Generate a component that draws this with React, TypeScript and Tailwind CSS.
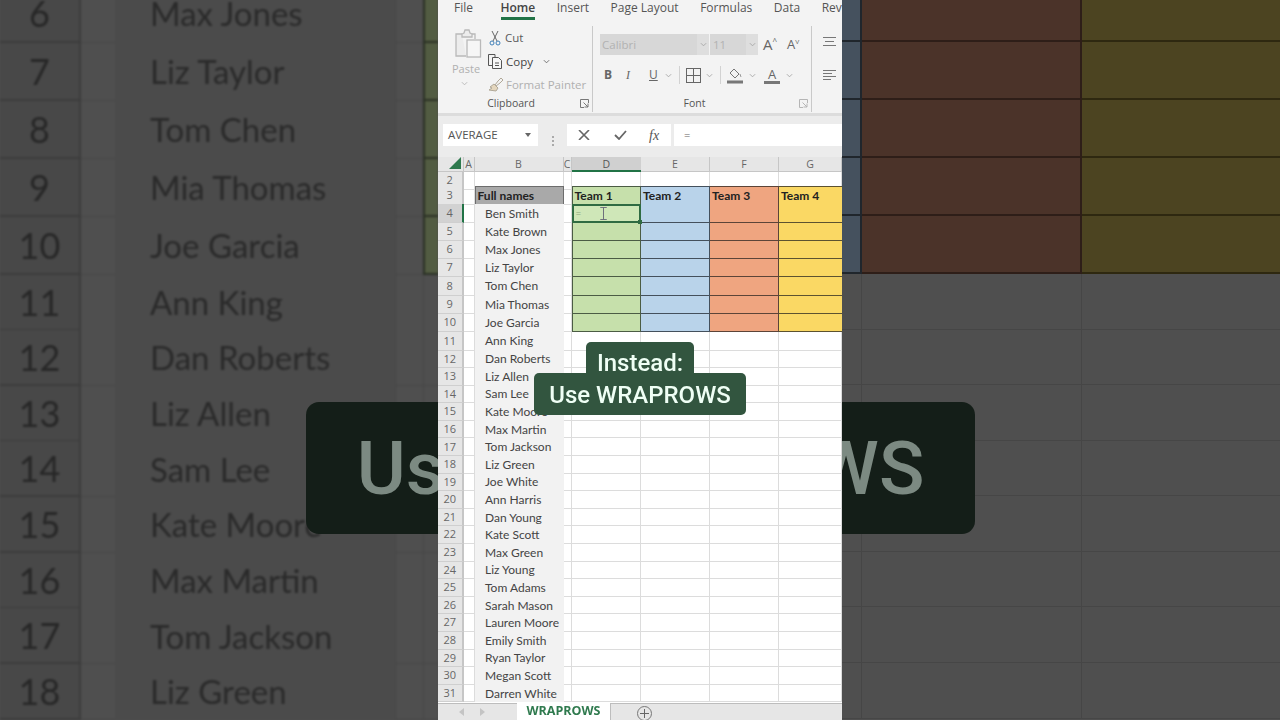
import { ReactNode } from "react";

const names = [
  "Ben Smith", "Kate Brown", "Max Jones", "Liz Taylor", "Tom Chen", "Mia Thomas", "Joe Garcia",
  "Ann King", "Dan Roberts", "Liz Allen", "Sam Lee", "Kate Moore", "Max Martin", "Tom Jackson",
  "Liz Green", "Joe White", "Ann Harris", "Dan Young", "Kate Scott", "Max Green", "Liz Young",
  "Tom Adams", "Sarah Mason", "Lauren Moore", "Emily Smith", "Ryan Taylor", "Megan Scott", "Darren White",
];

const leftRows = [
  { n: 6, name: "Max Jones", h: "h-[58px]", team: true },
  { n: 7, name: "Liz Taylor", h: "h-[58px]", team: true },
  { n: 8, name: "Tom Chen", h: "h-[58px]", team: true },
  { n: 9, name: "Mia Thomas", h: "h-[58px]", team: true },
  { n: 10, name: "Joe Garcia", h: "h-[58px]", team: true },
  { n: 11, name: "Ann King", h: "h-[55px]", team: false },
  { n: 12, name: "Dan Roberts", h: "h-[55.7px]", team: false },
  { n: 13, name: "Liz Allen", h: "h-[55.7px]", team: false },
  { n: 14, name: "Sam Lee", h: "h-[55.7px]", team: false },
  { n: 15, name: "Kate Moore", h: "h-[55.7px]", team: false },
  { n: 16, name: "Max Martin", h: "h-[55.7px]", team: false },
  { n: 17, name: "Tom Jackson", h: "h-[55.7px]", team: false },
  { n: 18, name: "Liz Green", h: "h-[55.7px]", team: false },
];

const sheetCols = "grid grid-cols-[25.5px_11px_89px_8px_69.5px_69px_69px_63px]";
const uiFont = "font-['Open_Sans',sans-serif]";
const cellFont = "font-['Lato',sans-serif]";

function Chevron({ className = "" }: { className?: string }) {
  return (
    <svg viewBox="0 0 8 5" className={`w-[7px] h-[5px] ${className}`} fill="none" stroke="currentColor" strokeWidth="1">
      <path d="M1 1l3 3 3-3" />
    </svg>
  );
}

function Launcher({ className = "" }: { className?: string }) {
  return (
    <svg viewBox="0 0 9 9" className={`w-[9px] h-[9px] ${className}`} fill="none" stroke="currentColor" strokeWidth="1">
      <path d="M8.5 4V.5H.5v8H4M3.5 3.5l4.5 4.5M8 4.5V8H4.5" />
    </svg>
  );
}

function ClipboardGroup() {
  return (
    <div className="w-[155px] shrink-0 flex flex-col border-r border-[#c9c9c9] h-[86px]">
      <div className="flex flex-1 pl-[14px] pt-[3px]">
        <div className="w-[36px] flex flex-col items-start text-[#b0b0b0]">
          <svg viewBox="0 0 28 30" className="w-[28px] h-[30px] ml-[2px]" fill="none" stroke="#b9b9b9" strokeWidth="1.3">
            <path d="M8 5H2v22h10" fill="#ececec" />
            <path d="M8 5l2-1 1-3h4l1 3 2 1v3H8z" fill="#ececec" />
            <path d="M18 5h3v5" />
            <rect x="13" y="11" width="13.5" height="17" fill="#f6f6f6" />
          </svg>
          <span className={`${uiFont} text-[11px] leading-[14px] mt-[3px]`}>Paste</span>
          <Chevron className="ml-[9px] mt-[5px] text-[#b5b5b5]" />
        </div>
        <div className={`${uiFont} text-[11.5px] leading-[16px] flex flex-col`}>
          <div className="flex items-center h-[20px] mt-[-1px] text-[#5a5a5a]">
            <svg viewBox="0 0 12 16" className="w-[12px] h-[16px] mr-[4px] ml-[1px]" fill="none" strokeWidth="1">
              <path d="M3 1l5 10M9 1L4 11" stroke="#666" />
              <circle cx="3" cy="13" r="2" stroke="#3f7fb8" />
              <circle cx="9" cy="13" r="2" stroke="#3f7fb8" />
            </svg>
            Cut
          </div>
          <div className="flex items-center h-[23px] mt-[2px] text-[#444]">
            <svg viewBox="0 0 15 15" className="w-[15px] h-[15px] mr-[3px]" fill="none" stroke="#555" strokeWidth="1">
              <path d="M7 3V.5H.5v11H4" />
              <path d="M4.5 3.5h6l3 3v8h-9z" fill="#f6f6f6" />
              <path d="M7 9h4M7 11.5h4" />
            </svg>
            Copy
            <Chevron className="ml-[10px] text-[#666]" />
          </div>
          <div className="flex items-center h-[23px] text-[#b0b0b0]">
            <svg viewBox="0 0 16 15" className="w-[16px] h-[15px] mr-[2px]" fill="none" stroke="#b0a898" strokeWidth="1">
              <path d="M7 8l3-4 3-3 2 2-3 3-4 3z" />
              <path d="M6 7l4 4-2 3-7-1 3-2-2-1z" fill="#e4d6bd" />
            </svg>
            Format Painter
          </div>
        </div>
      </div>
      <div className="relative h-[16px] flex items-center justify-center">
        <span className={`${uiFont} text-[10.5px] text-[#555] ml-[-8px]`}>Clipboard</span>
        <Launcher className="absolute right-[3px] top-[3px] text-[#777]" />
      </div>
    </div>
  );
}

function FontGroup() {
  return (
    <div className="w-[219px] shrink-0 flex flex-col border-r border-[#c9c9c9] h-[86px]">
      <div className="flex-1 pl-[7px] pt-[8px]">
        <div className="flex items-center h-[21px]">
          <div className={`${uiFont} w-[97px] h-full bg-[#d7d7d7] text-[#b2b2b2] text-[11.5px] leading-[21px] pl-[2px]`}>Calibri</div>
          <div className="w-[12px] h-full bg-[#dedede] flex items-center justify-center text-[#a5a5a5]">
            <Chevron />
          </div>
          <div className={`${uiFont} ml-[1px] w-[36px] h-full bg-[#d7d7d7] text-[#b2b2b2] text-[11.5px] leading-[21px] pl-[3px]`}>11</div>
          <div className="w-[12px] h-full bg-[#dedede] flex items-center justify-center text-[#a5a5a5]">
            <Chevron />
          </div>
          <span className={`${uiFont} ml-[5px] text-[#666] text-[15px] leading-none`}>A</span>
          <span className="text-[#666] text-[8px] leading-none mb-[8px]">^</span>
          <span className={`${uiFont} ml-[10px] text-[#666] text-[13px] leading-none`}>A</span>
          <span className="text-[#666] text-[8px] leading-none mb-[8px] rotate-180">^</span>
        </div>
        <div className={`${uiFont} flex items-center h-[24px] mt-[8px] text-[#666]`}>
          <span className="w-[22px] ml-[4px] font-bold text-[12px]">B</span>
          <span className="w-[23px] italic text-[12px] font-['Liberation_Serif',serif]">I</span>
          <span className="w-[15px] underline text-[12px]">U</span>
          <Chevron className="ml-[1px] text-[#a5a5a5]" />
          <div className="w-px h-[18px] bg-[#d2d2d2] ml-[7px]" />
          <svg viewBox="0 0 15 15" className="w-[15px] h-[15px] ml-[6px]" fill="none" stroke="#666" strokeWidth="1">
            <rect x="0.5" y="0.5" width="14" height="14" />
            <path d="M7.5 0v15M0 7.5h15" />
          </svg>
          <Chevron className="ml-[5px] text-[#a5a5a5]" />
          <div className="w-px h-[18px] bg-[#d2d2d2] ml-[7px]" />
          <svg viewBox="0 0 16 17" className="w-[16px] h-[17px] ml-[6px]" fill="none" stroke="#777" strokeWidth="1">
            <path d="M7 2l5 5-4 4-5-5z" />
            <path d="M13 7l1 3" stroke="#999" />
            <rect x="0" y="13.5" width="16" height="3" fill="#777" stroke="none" />
          </svg>
          <Chevron className="ml-[6px] text-[#a5a5a5]" />
          <div className="ml-[8px] w-[16px] flex flex-col items-center">
            <span className="text-[13px] leading-[14px]">A</span>
            <div className="w-[16px] h-[3px] bg-[#777]" />
          </div>
          <Chevron className="ml-[6px] text-[#a5a5a5]" />
        </div>
      </div>
      <div className="relative h-[16px] flex items-center justify-center">
        <span className={`${uiFont} text-[10.5px] text-[#555] ml-[-15px]`}>Font</span>
        <Launcher className="absolute right-[3px] top-[3px] text-[#b5b5b5]" />
      </div>
    </div>
  );
}

function Ribbon() {
  return (
    <div className="bg-[#f3f3f3] h-[113px] overflow-hidden">
      <div className={`${uiFont} flex items-start pl-[16px] h-[24px] gap-[21.5px] text-[12px] leading-[16px] pt-[0px] text-[#555] whitespace-nowrap`}>
        <span>File</span>
        <div className="ml-[6px] flex flex-col items-stretch">
          <span className="font-semibold text-[#444]">Home</span>
          <div className="h-[2.5px] bg-[#217346] mt-[1px]" />
        </div>
        <span>Insert</span>
        <span>Page Layout</span>
        <span>Formulas</span>
        <span>Data</span>
        <span>Review</span>
      </div>
      <div className="flex items-start mt-[2px]">
        <ClipboardGroup />
        <FontGroup />
        <div className="pl-[11px] pt-[11px] flex flex-col gap-[24px]">
          <svg viewBox="0 0 13 9" className="w-[13px] h-[9px]" stroke="#777" strokeWidth="1">
            <path d="M0 .5h13M2 4.5h9M0 8.5h13" />
          </svg>
          <svg viewBox="0 0 13 11" className="w-[13px] h-[11px]" stroke="#777" strokeWidth="1">
            <path d="M0 .5h13M0 3.5h9M0 6.5h13M0 9.5h8" />
          </svg>
        </div>
      </div>
    </div>
  );
}

function FormulaBar() {
  return (
    <div className="h-[44px] bg-[#ececec] border-t-[3px] border-[#dcdcdc] flex pt-[8px] pl-[5px]">
      <div className={`${uiFont} w-[95px] h-[22px] bg-white flex items-center justify-between pl-[5px] pr-[7px] text-[11.5px] text-[#555]`}>
        AVERAGE
        <svg viewBox="0 0 6 4" className="w-[6px] h-[4px]" fill="#666"><path d="M0 0h6L3 4z" /></svg>
      </div>
      <div className="w-[29px] flex flex-col items-center justify-center gap-[2px]">
        <div className="w-[2px] h-[2px] bg-[#aaa]" />
        <div className="w-[2px] h-[2px] bg-[#aaa]" />
        <div className="w-[2px] h-[2px] bg-[#aaa]" />
      </div>
      <div className="w-[104px] h-[22px] bg-white flex items-center pl-[11px] gap-[24px]">
        <svg viewBox="0 0 12 10" className="w-[12px] h-[10px]" fill="none" stroke="#666" strokeWidth="1.6"><path d="M1 0l10 10M11 0L1 10" /></svg>
        <svg viewBox="0 0 13 10" className="w-[13px] h-[10px]" fill="none" stroke="#666" strokeWidth="1.8"><path d="M1 5l4 4 7-8" /></svg>
        <span className="font-['Liberation_Serif',serif] italic text-[14px] text-[#555] ml-[-2px]">fx</span>
      </div>
      <div className={`${uiFont} ml-[3px] flex-1 h-[22px] bg-white pl-[10px] text-[11px] leading-[22px] text-[#666]`}>=</div>
    </div>
  );
}

function ColumnHeaders() {
  const head = `${uiFont} h-[15px] bg-[#e6e6e6] border-r border-b border-[#c6c6c6] text-[10.5px] leading-[14px] text-[#666] text-center overflow-hidden`;
  return (
    <div className="bg-[#ececec] pt-0">
      <div className={sheetCols}>
        <div className="h-[15px] bg-[#e6e6e6] border-r border-b border-[#c6c6c6] flex items-end justify-end pr-[2px] pb-[2px]">
          <svg viewBox="0 0 12 12" className="w-[12px] h-[12px]" fill="#2f7a4e"><path d="M12 0v12H0z" /></svg>
        </div>
        <div className={head}>A</div>
        <div className={head}>B</div>
        <div className={head}>C</div>
        <div className={`${uiFont} h-[15px] bg-[#d0d0d0] border-b-2 border-[#217346] text-[10.5px] leading-[14px] text-[#555] text-center`}>D</div>
        <div className={head}>E</div>
        <div className={head}>F</div>
        <div className={head}>G</div>
      </div>
    </div>
  );
}

function SheetRow({ n, h, selected = false, children }: { n: number; h: string; selected?: boolean; children: ReactNode }) {
  return (
    <div className={`${sheetCols} ${h}`}>
      <div className={`${uiFont} flex items-center justify-center border-b border-[#cfcfcf] text-[11px] text-[#666] border-r-2 ${selected ? "bg-[#d2d2d2] border-r-[#217346]" : "bg-[#e6e6e6] border-r-[#c6c6c6]"}`}>
        {n}
      </div>
      {children}
    </div>
  );
}

const plain = "border-r border-b border-[#dcdcdc]";

function Sheet() {
  return (
    <div className="flex flex-col h-[531px] overflow-hidden bg-white">
      <SheetRow n={2} h="h-[14px]">
        <div className={plain} />
        <div className={plain} />
        <div className={plain} />
        <div className={plain} />
        <div className={plain} />
        <div className={plain} />
        <div className={plain} />
      </SheetRow>
      <SheetRow n={3} h="h-[18.25px]">
        <div className={plain} />
        <div className={`${cellFont} bg-[#a9a9a9] border border-[#6d6d6d] font-bold text-[12px] leading-[17px] pl-[2px] text-[#222]`}>Full names</div>
        <div className={plain} />
        <div className={`${cellFont} bg-[#c6e0ab] border border-[#4b5c44] font-bold text-[12px] leading-[17px] pl-[2px] text-[#222]`}>Team 1</div>
        <div className={`${cellFont} bg-[#b9d3ea] border-y border-r border-[#44505c] font-bold text-[12px] leading-[17px] pl-[2px] text-[#222]`}>Team 2</div>
        <div className={`${cellFont} bg-[#efa580] border-y border-r border-[#5c4438] font-bold text-[12px] leading-[17px] pl-[2px] text-[#222]`}>Team 3</div>
        <div className={`${cellFont} bg-[#fad864] border-y border-[#5c5230] font-bold text-[12px] leading-[17px] pl-[2px] text-[#222]`}>Team 4</div>
      </SheetRow>
      {names.map((name, i) => {
        const n = i + 4;
        const h = n <= 10 ? "h-[18.25px]" : n === 11 ? "h-[18.5px]" : "h-[17.6px]";
        return (
          <SheetRow key={n} n={n} h={h} selected={n === 4}>
            <div className={plain} />
            <div className={`${cellFont} bg-[#f2f2f2] text-[12px] leading-[16px] pl-[10.5px] text-[#444] whitespace-nowrap flex items-center`}>{name}</div>
            <div className={plain} />
            {n === 4 && (
              <div className="relative bg-[#cfe7b8] border-2 border-[#2f6b42] flex items-center pl-[2px]">
                <span className={`${cellFont} text-[10px] text-[#8aa87a]`}>=</span>
                <svg viewBox="0 0 7 14" className="absolute left-[26px] top-[1px] w-[7px] h-[13px]" fill="none" stroke="#667" strokeWidth="1">
                  <path d="M0 .5h7M0 13.5h7M3.5 .5v13" />
                </svg>
                <div className="absolute right-[-3px] bottom-[-3px] w-[4px] h-[4px] bg-[#2f6b42]" />
              </div>
            )}
            {n > 4 && n <= 10 && <div className="bg-[#c6e0ab] border-x border-b border-[#4b5c44]" />}
            {n >= 4 && n <= 10 && <div className="bg-[#b9d3ea] border-r border-b border-[#44505c]" />}
            {n >= 4 && n <= 10 && <div className="bg-[#efa580] border-r border-b border-[#5c4438]" />}
            {n >= 4 && n <= 10 && <div className="bg-[#fad864] border-b border-[#5c5230]" />}
            {n > 10 && <div className={plain} />}
            {n > 10 && <div className={plain} />}
            {n > 10 && <div className={plain} />}
            {n > 10 && <div className={plain} />}
          </SheetRow>
        );
      })}
    </div>
  );
}

function SheetTabs() {
  return (
    <div className="h-[17px] bg-[#e6e6e6] border-t border-[#bdbdbd] flex items-start">
      <div className="w-[79px] flex items-center pl-[21px] gap-[16px] h-[16px] text-[#c4c4c4]">
        <svg viewBox="0 0 5 8" className="w-[5px] h-[8px]" fill="currentColor"><path d="M5 0v8L0 4z" /></svg>
        <svg viewBox="0 0 5 8" className="w-[5px] h-[8px]" fill="currentColor"><path d="M0 0v8l5-4z" /></svg>
      </div>
      <div className={`${uiFont} w-[94px] h-[17px] mt-[-1px] bg-white border-r border-[#bdbdbd] text-center font-bold text-[12.5px] leading-[16px] text-[#2f7a4e]`}>WRAPROWS</div>
      <div className="ml-[26px] mt-[2px] w-[15px] h-[15px] rounded-full border border-[#777] flex items-center justify-center">
        <svg viewBox="0 0 9 9" className="w-[9px] h-[9px]" stroke="#666" strokeWidth="1"><path d="M4.5 0v9M0 4.5h9" /></svg>
      </div>
    </div>
  );
}

function LeftPanel() {
  return (
    <div className="w-[438px] h-full bg-[#4f4f4f] overflow-hidden">
      <div className="mt-[-15px] blur-[0.8px]">
        {leftRows.map((r) => (
          <div key={r.n} className={`grid grid-cols-[81px_34px_280px_28px_15px] ${r.h}`}>
            <div className={`${cellFont} bg-[#484848] border-r-2 border-b-2 border-[#3c3c3c] text-[#272727] text-[36px] flex items-center justify-center`}>{r.n}</div>
            <div className="bg-[#4f4f4f] border-b border-[#464646]" />
            <div className={`${cellFont} bg-[#4b4b4b] text-[#2a2a2a] text-[33px] pl-[35px] flex items-center whitespace-nowrap`}>{r.name}</div>
            <div className="bg-[#4f4f4f] border-l border-b border-[#464646]" />
            <div className={r.team ? "bg-[#525c42] border-l-2 border-b-2 border-[#2a3024]" : "bg-[#4f4f4f] border-l border-b border-[#464646]"} />
          </div>
        ))}
      </div>
    </div>
  );
}

const rightHeights = ["h-[42px]", "h-[58px]", "h-[58px]", "h-[58px]", "h-[58px]"];
const rightLower = ["h-[56px]", "h-[55px]", "h-[56px]", "h-[55px]", "h-[56px]", "h-[55px]", "h-[56px]", "h-[56px]"];

function RightPanel() {
  return (
    <div className="w-[438px] h-full bg-[#4f4f4f] overflow-hidden blur-[0.5px]">
      {rightHeights.map((h, i) => (
        <div key={i} className={`grid grid-cols-[20px_220px_198px] ${h}`}>
          <div className="bg-[#45515e] border-r-2 border-b-2 border-[#20262c]" />
          <div className="bg-[#4b3329] border-r-2 border-b-2 border-[#2e1e18]" />
          <div className="bg-[#4c4421] border-b-2 border-[#2e2810]" />
        </div>
      ))}
      {rightLower.map((h, i) => (
        <div key={i} className={`grid grid-cols-[20px_220px_198px] ${h}`}>
          <div className="border-r border-b border-[#464646]" />
          <div className="border-r border-b border-[#464646]" />
          <div className="border-b border-[#464646]" />
        </div>
      ))}
    </div>
  );
}

export default function App() {
  return (
    <div className="relative w-[1280px] h-[720px] overflow-hidden flex bg-[#4f4f4f]">
      <LeftPanel />
      <div className="relative z-10 w-[404px] h-full shrink-0 flex flex-col overflow-hidden">
        <div className="blur-[0.3px] flex flex-col">
          <Ribbon />
          <FormulaBar />
          <ColumnHeaders />
          <Sheet />
          <SheetTabs />
        </div>
        <div className="absolute left-[96px] top-[342px] flex flex-col items-center font-['Roboto',sans-serif] font-medium text-[#effff5] text-[24px] w-[212px]">
          <div className="h-[31px] w-[108px] bg-[#32553f] rounded-t-[5px] text-center leading-[42px]">Instead:</div>
          <div className="h-[42px] w-[212px] bg-[#32553f] rounded-[5px] text-center leading-[44px] whitespace-nowrap">Use WRAPROWS</div>
        </div>
      </div>
      <RightPanel />
      <div className="absolute left-[306px] top-[402px] w-[669px] h-[132px] rounded-[13px] bg-[#141e18] text-[#7c8a82] font-['Roboto',sans-serif] font-medium text-[75px] leading-[132px] text-center whitespace-nowrap blur-[0.6px]">
        Use WRAPROWS
      </div>
    </div>
  );
}
